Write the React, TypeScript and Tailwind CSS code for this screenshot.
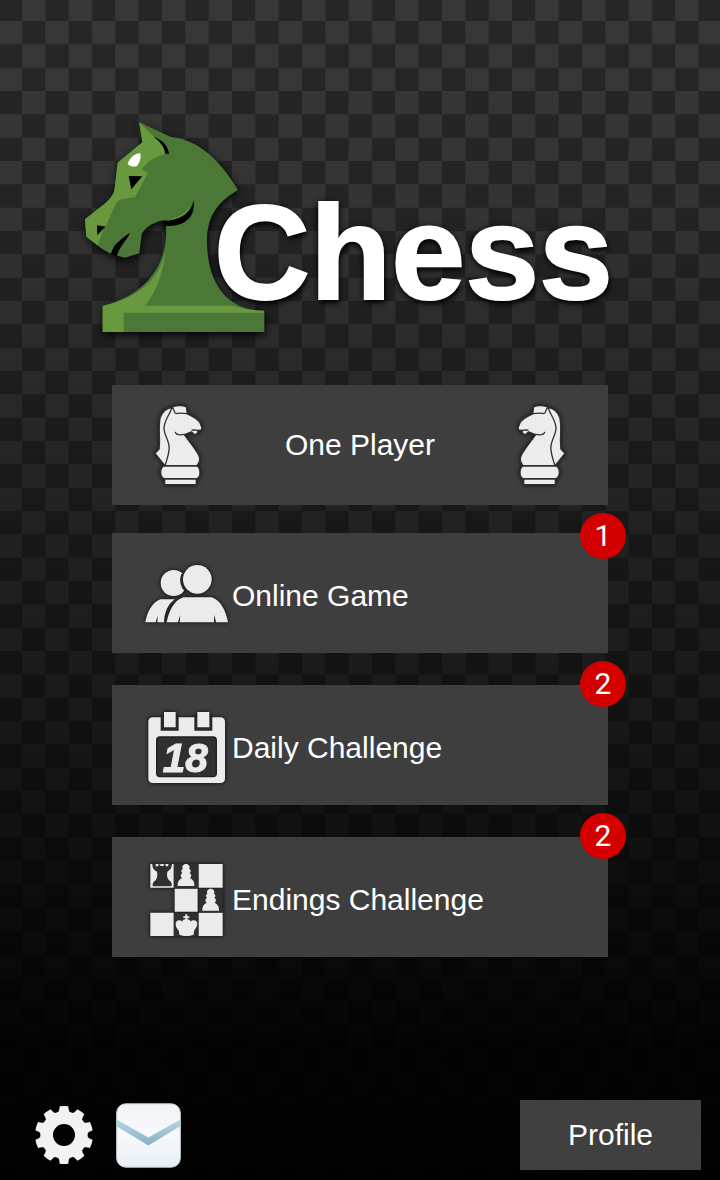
import type { ReactNode } from 'react';

interface MenuItem {
  label: string;
  badge: number;
  badgeClass: string;
  icon: ReactNode;
}

function CheckerBackground() {
  return (
    <div className="absolute inset-0 -z-10 overflow-hidden bg-[#373737]" aria-hidden="true">
      <svg className="block h-full w-full">
        <defs>
          <pattern id="checker" x="-118" y="-119" width="140" height="140" patternUnits="userSpaceOnUse" viewBox="0 0 6 6">
            <path
              fill="#262626"
              d="M0 0h1v1H0zM2 0h1v1H2zM4 0h1v1H4zM1 1h1v1H1zM3 1h1v1H3zM5 1h1v1H5zM0 2h1v1H0zM2 2h1v1H2zM4 2h1v1H4zM1 3h1v1H1zM3 3h1v1H3zM5 3h1v1H5zM0 4h1v1H0zM2 4h1v1H2zM4 4h1v1H4zM1 5h1v1H1zM3 5h1v1H3zM5 5h1v1H5z"
            />
          </pattern>
        </defs>
        <rect width="100%" height="100%" fill="url(#checker)" />
      </svg>
      <div className="absolute inset-0 bg-[linear-gradient(rgba(0,0,0,0),rgba(0,0,0,0.06)_17%,rgba(0,0,0,0.3)_36%,rgba(0,0,0,0.54)_60%,rgba(0,0,0,0.76)_75%,rgba(0,0,0,0.92)_89%,rgba(0,0,0,0.97))]" />
    </div>
  );
}

function LogoKnight() {
  return (
    <svg
      viewBox="36 30 552 642"
      className="h-[214px] w-[184px] shrink-0 overflow-visible drop-shadow-[1px_3px_4px_rgba(0,0,0,0.9)]"
      aria-hidden="true"
    >
      <path
        fill="#4b7837"
        d="M205 37 L300 81 C385 88 452 158 501 240 C440 275 406 320 408 400 C411 525 470 602 580 602 L580 666 L95 666 L95 588 C220 556 292 470 285 347 L271 332 C245 338 224 350 212 372 L205 430 L162 443 L118 431 L88 413 L46 380 L42 328 L100 282 C122 263 130 250 131 235 L140 158 L214 97 Z"
      />
      <path
        fill="#68993f"
        d="M205 37 L250 82 C272 99 284 118 284 131 C250 140 224 158 212 180 L231 188 L192 262 L148 268 L135 280 L105 347 L78 347 L78 376 L100 352 L80 406 L46 380 L42 328 L100 282 C122 263 130 250 131 235 L140 158 L214 97 Z"
      />
      <path fill="#000" d="M248 80 C277 90 293 111 294 132 L283 131 C279 110 268 95 248 80 Z" />
      <path fill="#fff" d="M207 129 C212 142 206 157 198 168 C187 172 174 168 170 161 C177 143 191 131 207 129 Z" />
      <path fill="#000" d="M173 198 L214 199 L181 238 Z" />
      <path fill="#000" d="M78 346 L103 350 L79 376 Z" />
      <path fill="#000" d="M177 369 C153 384 136 399 128 411 L119 432 L138 438 C144 410 165 395 177 369 Z" />
      <path fill="#68993f" d="M284 331 C318 326 345 309 358 290 C352 314 326 337 284 337 Z" />
      <path fill="#000" d="M368 271 C374 312 350 352 284 348 L271 331 C320 336 360 312 368 271 Z" />
      <path fill="#68993f" d="M284 422 C263 510 205 562 95 588 L95 666 L158 666 L158 608 L579 608 L579 602 C540 601 510 595 487 587 L222 587 C260 540 278 480 284 422 Z" />
    </svg>
  );
}

function KnightIcon({ flipped = false }: { flipped?: boolean }) {
  return (
    <svg
      viewBox="165 88 147 246"
      className={
        'h-[82px] w-[49px] overflow-visible drop-shadow-[0_0_2px_rgba(0,0,0,0.8)]' + (flipped ? ' -scale-x-100' : '')
      }
      aria-hidden="true"
    >
      <g fill="#ececec" stroke="#303030" strokeWidth="4" strokeLinejoin="round" strokeLinecap="round">
        <path d="M218 99 C226 92 250 91 262 97 L265 118 C282 126 298 136 303 144 L309 160 L306 167 L296 169 C298 176 291 181 284 178 L278 172 C269 173 265 178 256 180 C270 201 290 222 300 244 C306 258 300 266 294 273 L198 273 L168 236 L180 224 C185 190 176 158 184 128 C191 110 203 101 218 99 Z" />
        <path fill="none" d="M218 99 C215 118 194 136 195 163 C197 188 214 199 210 227 C208 246 202 259 199 271" />
        <path fill="none" d="M219 100 C229 102 223 116 231 117 C241 113 252 116 264 117" />
        <path fill="none" d="M229 173 C232 181 246 181 256 179 M279 166 L306 167" />
        <path d="M194 274 L294 274 C306 281 306 306 294 312 L194 312 C182 304 182 281 194 274 Z" />
        <path d="M197 313 H292 V330 H197 Z" />
      </g>
    </svg>
  );
}

function PeopleIcon() {
  return (
    <svg
      viewBox="45 0 258 258"
      className="size-[86px] shrink-0 overflow-visible drop-shadow-[0_0_2px_rgba(0,0,0,0.9)]"
      aria-hidden="true"
    >
      <g fill="#ebebeb">
        <circle cx="131" cy="99" r="39" />
        <path d="M91 148 H134 C112 164 103 190 102 217 H82 L83 197 L77 217 H46 C51 186 66 158 91 148 Z" />
        <path d="M154 71 A51 51 0 0 0 166 127 L180 110 V70 Z" fill="#292929" />
        <circle cx="202" cy="88" r="43" />
        <path d="M160 142 H245 C272 151 287 181 294 217 H258 L253 195 L252 217 H149 L151 195 L144 217 H110 C117 181 132 152 160 142 Z" />
      </g>
    </svg>
  );
}

function CalendarIcon() {
  return (
    <svg
      viewBox="45 6 258 258"
      className="size-[86px] shrink-0 overflow-visible drop-shadow-[0_0_2px_rgba(0,0,0,0.9)]"
      aria-hidden="true"
    >
      <rect x="55" y="52" width="230" height="197" rx="13" fill="#ebebeb" />
      <path fill="#292929" d="M92 50 H146 V92 H92 Z M193 50 H247 V92 H193 Z" />
      <path fill="#ebebeb" d="M102 36 H137 V82 H102 Z M202 36 H238 V82 H202 Z" />
      <rect x="80" y="111" width="179" height="119" rx="10" fill="#303030" stroke="#202020" strokeWidth="4" />
      <text
        x="166"
        y="217"
        textAnchor="middle"
        fill="#ebebeb"
        stroke="#ebebeb"
        strokeWidth="3"
        className="font-['Liberation_Sans',sans-serif] text-[122px] font-bold italic"
      >
        18
      </text>
    </svg>
  );
}

const PAWN =
  'M35 2 C43 2 48 9 45 17 C51 20 50 26 46 29 C53 34 51 41 47 44 C57 49 61 57 60 68 H10 C9 57 13 49 23 44 C19 41 17 34 24 29 C20 26 19 20 25 17 C22 9 27 2 35 2 Z';

function BoardIcon() {
  return (
    <svg
      viewBox="45 12 258 258"
      className="size-[86px] shrink-0 overflow-visible drop-shadow-[0_0_2px_rgba(0,0,0,0.9)]"
      aria-hidden="true"
    >
      <rect x="132" y="42" width="73" height="73" fill="#303030" />
      <rect x="205" y="115" width="73" height="71" fill="#303030" />
      <rect x="132" y="187" width="73" height="72" fill="#303030" />
      <path
        fill="#ebebeb"
        d="M61 42 H131 V113 H61 Z M206 42 H278 V113 H206 Z M134 116 H203 V185 H134 Z M61 188 H131 V258 H61 Z M206 188 H278 V258 H206 Z"
      />
      <path
        fill="#303030"
        d="M67 42 H77 V49 H85 V43 H91 V48 H101 V43 H107 V49 H115 V42 H126 C125 54 121 60 112 65 C110 75 111 84 117 91 C124 95 126 101 125 109 H68 C67 101 70 95 77 91 C82 83 83 74 81 65 C71 60 67 54 67 42 Z"
      />
      <path fill="#ebebeb" transform="translate(133 40)" d={PAWN} />
      <path fill="#ebebeb" transform="translate(207 114)" d={PAWN} />
      <path
        fill="#ebebeb"
        d="M166 193 H172 V199 H178 V204 H172 V208 C178 208 182 211 181 215 C190 207 202 210 202 222 C202 231 194 237 192 244 L191 254 C178 259 160 259 148 254 L147 244 C143 237 136 231 137 222 C137 210 149 207 157 215 C157 211 160 208 166 208 V204 H160 V199 H166 Z"
      />
    </svg>
  );
}

function GearIcon() {
  const teeth = Array.from({ length: 10 }, (_, i) => i * 36);

  return (
    <svg viewBox="-87 -87 174 174" className="size-[58px]" aria-hidden="true">
      <circle r="52" fill="none" stroke="#f2f2f2" strokeWidth="38" />
      {teeth.map(angle => (
        <path
          key={angle}
          fill="#f2f2f2"
          transform={`rotate(${angle})`}
          d="M-21 -66 C-14 -69 -14 -77 -13 -86 Q0 -88 13 -86 C14 -77 14 -69 21 -66 V-58 H-21 Z"
        />
      ))}
    </svg>
  );
}

function MailIcon() {
  return (
    <svg viewBox="288 39 195 194" className="size-[65px]" aria-hidden="true">
      <defs>
        <linearGradient id="paper" x1="0" y1="0" x2="0" y2="1">
          <stop offset="0" stopColor="#f1f3f6" />
          <stop offset="0.5" stopColor="#f7f9fb" />
          <stop offset="1" stopColor="#e9eff4" />
        </linearGradient>
        <linearGradient id="fold" x1="0" y1="0" x2="0" y2="1">
          <stop offset="0" stopColor="#b9d6e3" />
          <stop offset="1" stopColor="#86b0c3" />
        </linearGradient>
      </defs>
      <rect x="290" y="41" width="191" height="190" rx="27" fill="url(#paper)" stroke="#c9d4dc" strokeWidth="3" />
      <path fill="url(#fold)" d="M290 88 L385 142 L481 88 V108 L385 166 L290 108 Z" />
    </svg>
  );
}

const MENU_ITEMS: MenuItem[] = [
  { label: 'Online Game', badge: 1, badgeClass: '-top-5', icon: <PeopleIcon /> },
  { label: 'Daily Challenge', badge: 2, badgeClass: '-top-6', icon: <CalendarIcon /> },
  { label: 'Endings Challenge', badge: 2, badgeClass: '-top-6', icon: <BoardIcon /> }
];

export default function App() {
  return (
    <div className="relative isolate flex min-h-screen flex-col overflow-hidden font-['Liberation_Sans',Arial,sans-serif] text-[30px] leading-9 text-white">
      <CheckerBackground />

      <header className="flex items-end justify-center pt-[120px] pr-6">
        <LogoKnight />
        <h1 className="relative -ml-[53px] pb-[14px] text-[133px] leading-none font-bold [-webkit-text-stroke:2px_white] [text-shadow:2px_4px_5px_rgba(0,0,0,0.9),-2px_0_6px_rgba(0,0,0,0.8)]">
          Chess
        </h1>
      </header>

      <main className="mx-auto mt-[51px] mb-8 w-full max-w-[496px]">
        <button
          type="button"
          className="flex h-[120px] w-full items-center justify-between bg-[#3e3e3e] px-[42px] hover:bg-[#484848]"
        >
          <KnightIcon />
          <span>One Player</span>
          <KnightIcon flipped />
        </button>

        <div className="mt-7 flex flex-col gap-8">
          {MENU_ITEMS.map(item => (
            <button
              key={item.label}
              type="button"
              className="relative flex h-[120px] items-center bg-[#3e3e3e] pl-[33px] text-left hover:bg-[#484848]"
            >
              {item.icon}
              <span className="pt-1.5 pl-px">{item.label}</span>
              <span
                className={`absolute -right-[18px] flex size-[46px] items-center justify-center rounded-full bg-[#d40000] font-['Roboto',sans-serif] ${item.badgeClass}`}
              >
                {item.badge}
              </span>
            </button>
          ))}
        </div>
      </main>

      <footer className="mt-auto flex items-center justify-between pr-[19px] pb-[10px] pl-[35px]">
        <div className="flex items-center gap-[23px]">
          <button type="button" aria-label="Settings">
            <GearIcon />
          </button>
          <button type="button" aria-label="Messages">
            <MailIcon />
          </button>
        </div>
        <button type="button" className="h-[70px] w-[181px] bg-[#404040] hover:bg-[#4a4a4a]">
          Profile
        </button>
      </footer>
    </div>
  );
}
